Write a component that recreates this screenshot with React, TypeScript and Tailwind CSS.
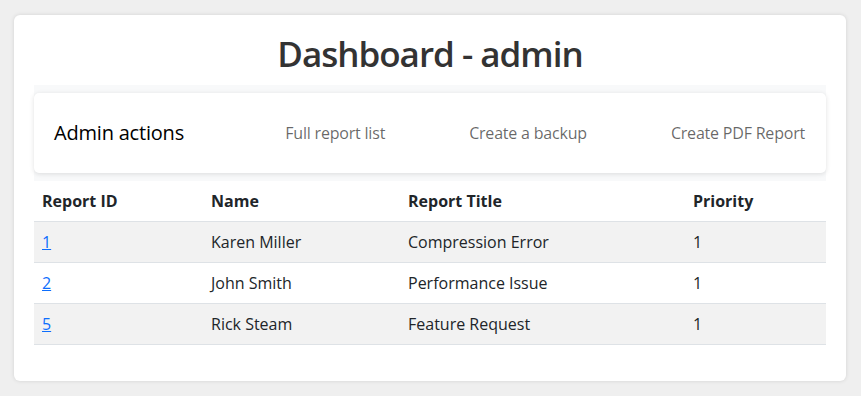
import React from "react";

const rows = [
  { id: "1", name: "Karen Miller", title: "Compression Error", priority: "1" },
  { id: "2", name: "John Smith", title: "Performance Issue", priority: "1" },
  { id: "5", name: "Rick Steam", title: "Feature Request", priority: "1" },
];

export default function App() {
  return (
    <div
      className="min-h-[396px] w-full bg-[#efefef] pt-[15px] pl-[14px] pr-[15px] pb-[16px]"
      style={{ fontFamily: '"Open Sans", "Noto Sans", sans-serif' }}
    >
      <div className="rounded-[6px] bg-white shadow-[0_0_4px_rgba(0,0,0,0.12)] px-5 pt-[15px] pb-[36px]">
        <h1 className="text-center text-[35px] leading-[48px] font-semibold tracking-[-1px] text-[#333333] mb-[7px]">
          Dashboard - admin
        </h1>
        <div className="bg-[#f8f9fa] py-2">
          <div className="flex h-[80px] items-center rounded-[5px] bg-white pl-5 pr-[21px] shadow-[0_1px_5px_rgba(0,0,0,0.12)]">
            <span className="text-[20px] tracking-[-0.2px] text-black">Admin actions</span>
            <div className="ml-auto flex gap-[84px] text-[16px] tracking-[-0.2px] text-[rgba(0,0,0,0.6)]">
              <a className="cursor-pointer">Full report list</a>
              <a className="cursor-pointer">Create a backup</a>
              <a className="cursor-pointer">Create PDF Report</a>
            </div>
          </div>
        </div>
        <table className="w-full border-collapse text-[16px] text-[#212529]">
          <colgroup>
            <col className="w-[169px]" />
            <col className="w-[197px]" />
            <col className="w-[285px]" />
            <col />
          </colgroup>
          <thead>
            <tr className="h-[40px] border-b border-[#dee2e6]">
              <th className="px-2 text-left font-bold">Report ID</th>
              <th className="px-2 text-left font-bold">Name</th>
              <th className="px-2 text-left font-bold">Report Title</th>
              <th className="px-2 text-left font-bold">Priority</th>
            </tr>
          </thead>
          <tbody>
            {rows.map((r, i) => (
              <tr
                key={r.id}
                className={`h-[41px] border-b border-[#dee2e6] ${i % 2 === 0 ? "bg-[#f2f2f2]" : "bg-white"}`}
              >
                <td className="px-2">
                  <a className="text-[#0d6efd] underline cursor-pointer">{r.id}</a>
                </td>
                <td className="px-2">{r.name}</td>
                <td className="px-2">{r.title}</td>
                <td className="px-2">{r.priority}</td>
              </tr>
            ))}
          </tbody>
        </table>
      </div>
    </div>
  );
}
